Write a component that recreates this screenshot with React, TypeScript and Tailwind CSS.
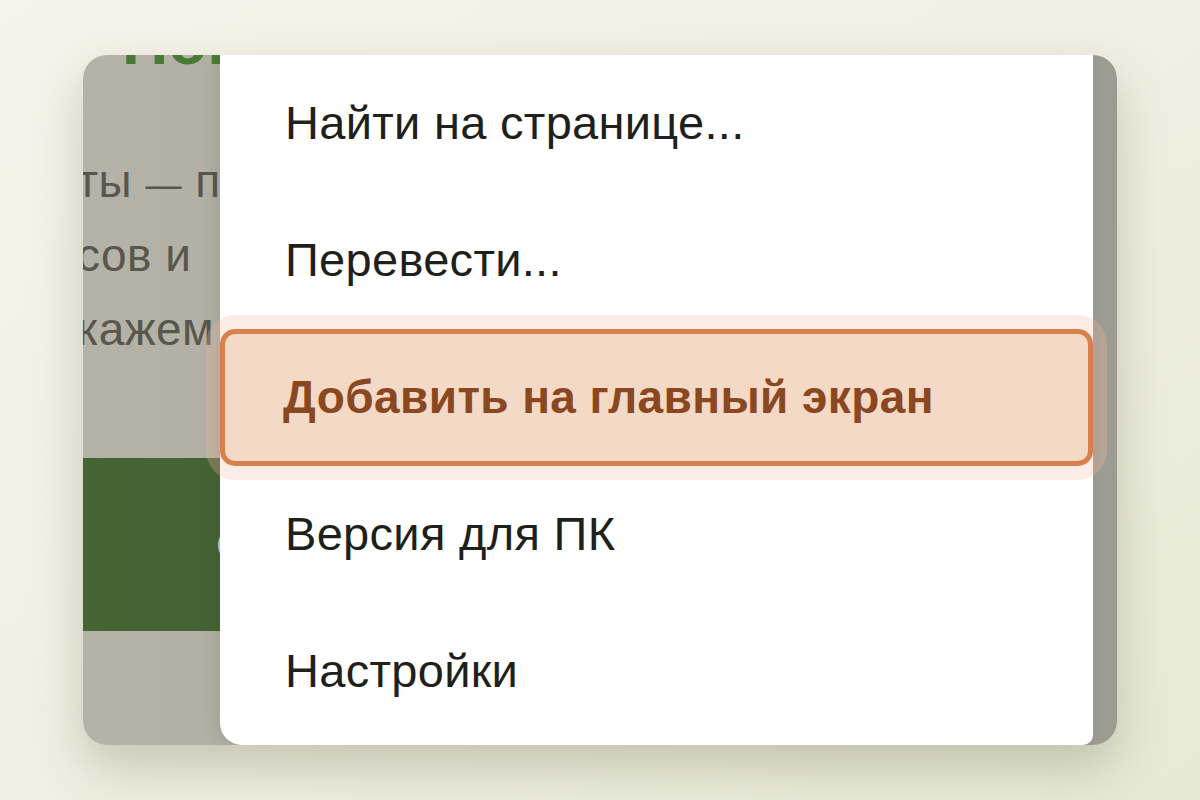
import React from 'react';

const items = [
  { label: 'Найти на странице...' },
  { label: 'Перевести...' },
  { label: 'Добавить на главный экран', active: true },
  { label: 'Версия для ПК' },
  { label: 'Настройки' },
];

const PageBehind: React.FC = () => (
  <div className="flex h-full flex-col bg-gradient-to-r from-[#b5b3a7] via-[#adaba0] to-[#9c9b91]">
    <div className="ml-[39px] mt-[-43px] h-[60px] text-[64px] font-bold leading-[60px] text-[#4a7a35]">
      Новое
    </div>
    <div className="ml-[-6px] mt-[72px] text-[46px] leading-[74px] tracking-[0.5px] text-[#57574d]">
      <p>
        ты <span className="text-[36px] leading-none">—</span> подробности
      </p>
      <p>сов и&nbsp;&nbsp;&nbsp;ответов</p>
      <p>кажем что делать</p>
    </div>
    <div className="mt-[92px] flex h-[173px] w-[700px] items-center bg-gradient-to-r from-[#466535] to-[#3f5b30] pl-[133px] text-[40px] text-[#c9cfc2]">
      Скачать
    </div>
  </div>
);

const MenuItem: React.FC<{ label: string; active?: boolean }> = ({ label, active }) => {
  if (active) {
    return (
      <div className="flex h-[137px] items-center rounded-[15px] border-[5px] border-[#d9804f] bg-[#f5d9c7] pl-[58px] text-[46px] font-bold tracking-[0.4px] text-[#8a4821] shadow-[0_0_0_14px_rgba(240,185,160,0.28)]">
        {label}
      </div>
    );
  }
  return (
    <div className="flex h-[137px] items-center pl-[65px] text-[47px] tracking-[0.3px] text-[#1f1f1b]">
      {label}
    </div>
  );
};

export default function App() {
  return (
    <div
      className="flex h-[800px] w-[1200px] items-center justify-center bg-gradient-to-br from-[#f6f4ea] via-[#f1f0e3] to-[#e6ead5]"
      style={{ fontFamily: '"Liberation Sans", Arial, sans-serif' }}
    >
      <div className="relative h-[690px] w-[1034px] overflow-hidden rounded-[24px] shadow-[0_22px_50px_rgba(90,90,60,0.28)]">
        <PageBehind />
        <div className="absolute bottom-0 left-[137px] right-[24px] top-0 rounded-bl-[22px] rounded-br-[10px] bg-white shadow-[-6px_0_16px_rgba(60,60,40,0.12)]">
          {items.map((it) => (
            <MenuItem key={it.label} label={it.label} active={it.active} />
          ))}
        </div>
      </div>
    </div>
  );
}
